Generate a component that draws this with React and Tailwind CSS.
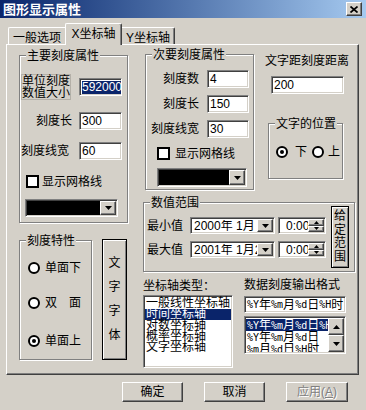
import React from 'react';

const sunken =
  'border border-t-[#808080] border-l-[#808080] border-r-white border-b-white shadow-[inset_1px_1px_0_#404040,inset_-1px_-1px_0_#d4d0c8]';
const raised =
  'border border-t-white border-l-white border-r-[#404040] border-b-[#404040] shadow-[inset_-1px_-1px_0_#808080]';
const framed = 'border border-black shadow-[inset_1px_1px_0_#fff,inset_-1px_-1px_0_#808080]';

const Down = () => (
  <svg width="7" height="4" viewBox="0 0 7 4">
    <path d="M0 0h7L3.5 4z" fill="#000" />
  </svg>
);
const Up = () => (
  <svg width="7" height="4" viewBox="0 0 7 4">
    <path d="M0 4h7L3.5 0z" fill="#000" />
  </svg>
);
const TinyArrow = ({ up }) => (
  <svg width="5" height="3" viewBox="0 0 5 3">
    <path d={up ? 'M0 3h5L2.5 0z' : 'M0 0h5L2.5 3z'} fill="#000" />
  </svg>
);

const Radio = ({ checked }) => (
  <svg width="12" height="12" viewBox="0 0 12 12" className="shrink-0">
    <circle cx="6" cy="6" r="5" fill="#fff" stroke="#000" strokeWidth="2" />
    {checked && <circle cx="6" cy="6" r="2" fill="#000" />}
  </svg>
);

const Check = () => <span className="w-[13px] h-[13px] bg-white border-2 border-black shrink-0" />;

// ascii bits in SimSun are half width, mono keeps that
const Fmt = ({ s }) =>
  s.split(/([\x00-\x7f]+)/).map((p, i) =>
    /[\x00-\x7f]/.test(p) ? (
      <span key={i} className="font-[family-name:DejaVu_Sans_Mono,monospace] text-[10px]">
        {p}
      </span>
    ) : (
      <span key={i}>{p}</span>
    )
  );

const Group = ({ title, className = '', children }) => (
  <div className={`relative border border-[#808080] shadow-[inset_1px_1px_0_#fff,1px_1px_0_#fff] ${className}`}>
    <span className="absolute -top-[6px] left-[6px] px-[1px] bg-[#d4d0c8] leading-[12px] whitespace-nowrap">
      {title}
    </span>
    {children}
  </div>
);

const Edit = ({ className = '', children }) => (
  <div className={`${sunken} bg-white flex items-center pl-[2px] whitespace-nowrap overflow-hidden ${className}`}>
    {children}
  </div>
);

const BlackCombo = ({ className = '' }) => (
  <div className={`${sunken} bg-black flex justify-end items-center p-[1px] ${className}`}>
    <div className={`${raised} bg-[#d4d0c8] w-[16px] h-full flex items-center justify-center`}>
      <Down />
    </div>
  </div>
);

const DateBox = ({ text }) => (
  <div className={`${sunken} bg-white flex items-center w-[85px] h-[17px] p-[1px]`}>
    <div className="flex-1 overflow-hidden whitespace-nowrap pl-[2px]">{text}</div>
    <div className={`${raised} bg-[#d4d0c8] w-[16px] h-full flex items-center justify-center shrink-0`}>
      <Down />
    </div>
  </div>
);

const TimeBox = ({ className = '' }) => (
  <div className={`${sunken} bg-white flex items-center w-[48px] h-[17px] p-[1px] ${className}`}>
    <div className="flex-1 overflow-hidden whitespace-nowrap pl-[6px]">0:00</div>
    <div className="w-[16px] h-full flex flex-col shrink-0">
      <div className={`${raised} bg-[#d4d0c8] flex-1 flex items-center justify-center`}>
        <TinyArrow up />
      </div>
      <div className={`${raised} bg-[#d4d0c8] flex-1 flex items-center justify-center`}>
        <TinyArrow />
      </div>
    </div>
  </div>
);

const LabelRow = ({ label, value, labelClass, className = '' }) => (
  <div className={`flex items-center h-[18px] ${className}`}>
    <span className={`whitespace-nowrap ${labelClass}`}>{label}</span>
    <Edit className="h-[18px] w-[43px]">{value}</Edit>
  </div>
);

export default function App() {
  return (
    <div className="w-[366px] h-[410px] bg-[#d4d0c8] text-[12px] leading-[12px] text-black overflow-hidden flex flex-col font-[family-name:Liberation_Sans,Noto_Sans_CJK_SC,sans-serif]">
      {/* title bar */}
      <div className="h-[18px] shrink-0 flex items-center justify-between bg-linear-to-r from-[#0a246a] to-[#a6caf0] pl-[3px] pr-[4px]">
        <span className="text-white font-bold text-[13px] leading-[13px]">图形显示属性</span>
        <div className={`${raised} bg-[#d4d0c8] w-[16px] h-[14px] flex items-center justify-center`}>
          <svg width="8" height="7" viewBox="0 0 8 7">
            <path d="M0.5 0.5L7.5 6.5M7.5 0.5L0.5 6.5" stroke="#000" strokeWidth="1.7" />
          </svg>
        </div>
      </div>

      {/* tabs */}
      <div className="h-[26px] shrink-0 flex items-end pl-[8px] relative z-10">
        <div className="w-[57px] h-[17px] border-l border-t border-white rounded-tl-[2px] flex items-center justify-center pt-[3px]">
          一般选项
        </div>
        <div className="w-[57px] h-[22px] -mb-[1px] bg-[#d4d0c8] border-l border-t border-white border-r border-r-[#404040] shadow-[inset_-1px_0_0_#808080] rounded-t-[2px] flex items-center justify-center pb-[1px]">
          X坐标轴
        </div>
        <div className="w-[53px] h-[17px] border-t border-white border-r border-r-[#404040] shadow-[inset_-1px_0_0_#808080] rounded-tr-[2px] flex items-center justify-center pt-[3px]">
          Y坐标轴
        </div>
      </div>

      {/* tab page */}
      <div className="ml-[6px] w-[353px] h-[331px] shrink-0 border border-t-white border-l-white border-r-[#404040] border-b-[#404040] shadow-[inset_-1px_-1px_0_#808080] flex">
        {/* left column */}
        <div className="ml-[12px] mt-[10px] w-[109px] flex flex-col shrink-0">
          <Group title="主要刻度属性" className="h-[168px] flex flex-col">
            <div className="mt-[18px] flex items-center h-[26px]">
              <div className="ml-[1px] w-[50px] h-[26px] border border-[#b4b0a8] flex flex-col justify-center">
                <span>单位刻度</span>
                <span>数值大小</span>
              </div>
              <Edit className="ml-[8px] w-[43px] h-[18px]">
                <span className="bg-[#0a246a] text-white leading-[13px]">5920000</span>
              </Edit>
            </div>
            <LabelRow className="mt-[12px]" label="刻度长" value="300" labelClass="w-[52px] text-right mr-[7px]" />
            <LabelRow className="mt-[12px]" label="刻度线宽" value="60" labelClass="w-[52px] pl-[1px] mr-[7px]" />
            <div className="mt-[15px] ml-[6px] h-[13px] flex items-center">
              <Check />
              <span className="ml-[3px]">显示网格线</span>
            </div>
            <BlackCombo className="mt-[11px] ml-[5px] w-[93px] h-[18px]" />
          </Group>

          <div className="mt-[17px] flex items-start">
            <Group title="刻度特性" className="w-[73px] h-[120px] flex flex-col shrink-0">
              <div className="mt-[21px] ml-[8px] h-[12px] flex items-center">
                <Radio />
                <span className="ml-[5px]">单面下</span>
              </div>
              <div className="mt-[23px] ml-[8px] h-[12px] flex items-center">
                <Radio />
                <span className="ml-[5px] whitespace-pre">双　面</span>
              </div>
              <div className="mt-[26px] ml-[8px] h-[12px] flex items-center">
                <Radio checked />
                <span className="ml-[5px]">单面上</span>
              </div>
            </Group>
            <div className={`${framed} ml-[10px] w-[25px] h-[121px] -mt-[1px] flex flex-col items-center pt-[17px] gap-[12px]`}>
              <span>文</span>
              <span>字</span>
              <span>字</span>
              <span>体</span>
            </div>
          </div>
        </div>

        {/* right area */}
        <div className="ml-[15px] w-[213px] flex flex-col shrink-0">
          <div className="flex items-start">
            <Group title="次要刻度属性" className="ml-[2px] mt-[9px] w-[109px] h-[136px] flex flex-col shrink-0">
              <div className="mt-[15px] flex items-center h-[18px]">
                <span className="w-[53px] text-right mr-[8px]">刻度数</span>
                <Edit className="w-[42px] h-[18px]">4</Edit>
              </div>
              <div className="mt-[7px] flex items-center h-[18px]">
                <span className="w-[53px] text-right mr-[8px]">刻度长</span>
                <Edit className="w-[42px] h-[18px]">150</Edit>
              </div>
              <div className="mt-[7px] flex items-center h-[18px]">
                <span className="w-[53px] text-right mr-[8px]">刻度线宽</span>
                <Edit className="w-[42px] h-[18px]">30</Edit>
              </div>
              <div className="mt-[9px] ml-[11px] h-[13px] flex items-center">
                <Check />
                <span className="ml-[5px]">显示网格线</span>
              </div>
              <BlackCombo className="mt-[8px] ml-[11px] w-[90px] h-[19px]" />
            </Group>

            <div className="ml-[11px] mt-[10px] w-[84px] flex flex-col shrink-0">
              <span className="whitespace-nowrap">文字距刻度距离</span>
              <Edit className="ml-[6px] mt-[9px] w-[73px] h-[18px]">200</Edit>
              <Group title="文字的位置" className="ml-[3px] mt-[29px] w-[75px] h-[56px]">
                <div className="mt-[22px] h-[12px] flex items-center">
                  <span className="ml-[7px]">
                    <Radio checked />
                  </span>
                  <span className="ml-[7px]">下</span>
                  <span className="ml-[5px]">
                    <Radio />
                  </span>
                  <span className="ml-[4px]">上</span>
                </div>
              </Group>
            </div>
          </div>

          <Group title="数值范围" className="mt-[12px] w-[212px] h-[70px] flex items-start">
            <div className="ml-[3px] flex flex-col">
              <div className="mt-[14px] flex items-center h-[17px]">
                <span className="w-[43px]">最小值</span>
                <DateBox text="2000年 1月 1日" />
                <TimeBox className="ml-[3px]" />
              </div>
              <div className="mt-[7px] flex items-center h-[17px]">
                <span className="w-[43px]">最大值</span>
                <DateBox text="2001年 1月21日" />
                <TimeBox className="ml-[3px]" />
              </div>
            </div>
            <div className={`${framed} ml-[5px] mt-[3px] w-[18px] h-[62px] flex flex-col items-center pt-[3px] leading-[13.5px]`}>
              <span>给</span>
              <span>定</span>
              <span>范</span>
              <span>围</span>
            </div>
          </Group>

          <div className="mt-[8px] flex items-start">
            <div className="w-[90px] flex flex-col shrink-0">
              <span className="whitespace-nowrap">坐标轴类型：</span>
              <div className={`${sunken} bg-white mt-[3px] h-[73px] p-[1px] pt-[2px] flex flex-col leading-[11px] whitespace-nowrap overflow-hidden`}>
                <span className="h-[11px] pl-[1px]">一般线性坐标轴</span>
                <span className="h-[11px] pl-[1px] bg-[#0a246a] text-white">时间坐标轴</span>
                <span className="h-[11px] pl-[1px]">对数坐标轴</span>
                <span className="h-[11px] pl-[1px]">概率坐标轴</span>
                <span className="h-[11px] pl-[1px]">文字坐标轴</span>
              </div>
            </div>
            <div className="ml-[11px] -mt-[1px] w-[102px] flex flex-col shrink-0">
              <span className="whitespace-nowrap">数据刻度输出格式</span>
              <Edit className="mt-[5px] h-[17px] w-[102px]">
                <Fmt s="%Y年%m月%d日%H时" />
              </Edit>
              <div className={`${sunken} bg-white mt-[3px] h-[38px] p-[1px] flex`}>
                <div className="flex-1 flex flex-col pt-[1px] overflow-hidden whitespace-nowrap leading-[12px]">
                  <span className="h-[12px] pl-[1px] bg-[#0a246a] text-white">
                    <Fmt s="%Y年%m月%d日%H时" />
                  </span>
                  <span className="h-[12px] pl-[1px]">
                    <Fmt s="%Y年%m月%d日" />
                  </span>
                  <span className="h-[12px] pl-[1px]">
                    <Fmt s="%m月%d日%H时" />
                  </span>
                </div>
                <div className="w-[16px] flex flex-col shrink-0">
                  <div className={`${raised} bg-[#d4d0c8] flex-1 flex items-center justify-center`}>
                    <Up />
                  </div>
                  <div className={`${raised} bg-[#d4d0c8] flex-1 flex items-center justify-center`}>
                    <Down />
                  </div>
                </div>
              </div>
            </div>
          </div>
        </div>
      </div>

      {/* dialog buttons */}
      <div className="mt-[7px] h-[20px] flex shrink-0">
        <button className={`${raised} ml-[122px] w-[61px] h-[20px] bg-[#d4d0c8] flex items-center justify-center`}>确定</button>
        <button className={`${raised} ml-[21px] w-[61px] h-[20px] bg-[#d4d0c8] flex items-center justify-center`}>取消</button>
        <button className={`${raised} ml-[21px] w-[62px] h-[20px] bg-[#d4d0c8] flex items-center justify-center text-[#808080] [text-shadow:1px_1px_0_#fff]`}>
          应用(<span className="underline">A</span>)
        </button>
      </div>
    </div>
  );
}
